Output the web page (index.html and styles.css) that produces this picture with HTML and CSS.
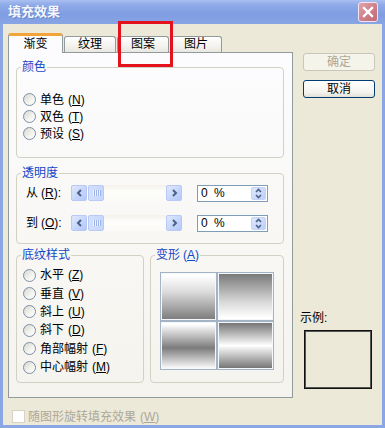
FILE: index.html
```html
<!DOCTYPE html>
<html lang="zh-CN">
<head>
  <meta charset="UTF-8">
  <title>填充效果</title>
  <link rel="stylesheet" href="styles.css">
</head>
<body>
  <div class="window">
    <div class="titlebar">
      <span class="title">填充效果</span>
      <span class="close">
        <svg width="12" height="12" viewBox="0 0 12 12"><path d="M2 2 L10 10 M10 2 L2 10" stroke="#fff" stroke-width="2.4" stroke-linecap="square"/></svg>
      </span>
    </div>

    <div class="frame">
      <div class="client">
        <div class="main">
          <div class="tabs">
            <div class="tab active">渐变</div>
            <div class="tab">纹理</div>
            <div class="tab">图案</div>
            <div class="tab">图片</div>
          </div>

          <div class="panel">
            <fieldset class="group colors">
              <legend>颜色</legend>
              <div class="radio-list">
                <div class="radio-row"><span class="radio"></span>单色<span class="key" lang="en">(<u>N</u>)</span></div>
                <div class="radio-row"><span class="radio"></span>双色<span class="key" lang="en">(<u>T</u>)</span></div>
                <div class="radio-row"><span class="radio"></span>预设<span class="key" lang="en">(<u>S</u>)</span></div>
              </div>
            </fieldset>

            <fieldset class="group opacity">
              <legend>透明度</legend>
              <div class="slider-row">
                <span class="slider-label">从<span class="key" lang="en">(<u>R</u>):</span></span>
                <div class="scrollbar">
                  <span class="sb-btn"><svg width="7" height="8" viewBox="0 0 7 8"><path d="M5 1 L2 4 L5 7" fill="none" stroke="#4d6185" stroke-width="2"/></svg></span>
                  <span class="thumb"><i></i><i></i><i></i><i></i></span>
                  <span class="track"></span>
                  <span class="sb-btn"><svg width="7" height="8" viewBox="0 0 7 8"><path d="M2 1 L5 4 L2 7" fill="none" stroke="#4d6185" stroke-width="2"/></svg></span>
                </div>
                <div class="spin-input">
                  <span class="value" lang="en">0 %</span>
                  <span class="spin">
                    <svg width="7" height="11" viewBox="0 0 7 11"><path d="M1 4 L3.5 1.5 L6 4 M1 7 L3.5 9.5 L6 7" fill="none" stroke="#4d6185" stroke-width="1.6"/></svg>
                  </span>
                </div>
              </div>
              <div class="slider-row">
                <span class="slider-label">到<span class="key" lang="en">(<u>O</u>):</span></span>
                <div class="scrollbar">
                  <span class="sb-btn"><svg width="7" height="8" viewBox="0 0 7 8"><path d="M5 1 L2 4 L5 7" fill="none" stroke="#4d6185" stroke-width="2"/></svg></span>
                  <span class="thumb"><i></i><i></i><i></i><i></i></span>
                  <span class="track"></span>
                  <span class="sb-btn"><svg width="7" height="8" viewBox="0 0 7 8"><path d="M2 1 L5 4 L2 7" fill="none" stroke="#4d6185" stroke-width="2"/></svg></span>
                </div>
                <div class="spin-input">
                  <span class="value" lang="en">0 %</span>
                  <span class="spin">
                    <svg width="7" height="11" viewBox="0 0 7 11"><path d="M1 4 L3.5 1.5 L6 4 M1 7 L3.5 9.5 L6 7" fill="none" stroke="#4d6185" stroke-width="1.6"/></svg>
                  </span>
                </div>
              </div>
            </fieldset>

            <div class="bottom-groups">
              <fieldset class="group shading">
                <legend>底纹样式</legend>
                <div class="radio-list">
                  <div class="radio-row"><span class="radio"></span>水平<span class="key" lang="en">(<u>Z</u>)</span></div>
                  <div class="radio-row"><span class="radio"></span>垂直<span class="key" lang="en">(<u>V</u>)</span></div>
                  <div class="radio-row"><span class="radio"></span>斜上<span class="key" lang="en">(<u>U</u>)</span></div>
                  <div class="radio-row"><span class="radio"></span>斜下<span class="key" lang="en">(<u>D</u>)</span></div>
                  <div class="radio-row"><span class="radio"></span>角部幅射<span class="key" lang="en">(<u>F</u>)</span></div>
                  <div class="radio-row"><span class="radio"></span>中心幅射<span class="key" lang="en">(<u>M</u>)</span></div>
                </div>
              </fieldset>

              <fieldset class="group variants">
                <legend>变形<span class="key" lang="en">(<u>A</u>)</span></legend>
                <div class="tiles">
                  <div class="tile t1"></div>
                  <div class="tile t2"></div>
                  <div class="tile t3"></div>
                  <div class="tile t4"></div>
                </div>
              </fieldset>
            </div>
          </div>

          <div class="check-row"><span class="checkbox"></span>随图形旋转填充效果<span class="key" lang="en">(<u>W</u>)</span></div>
        </div>

        <div class="side">
          <button class="btn" disabled>确定</button>
          <button class="btn default">取消</button>
          <div class="sample-label">示例:</div>
          <div class="sample-box"></div>
        </div>
      </div>
    </div>

    <div class="annotation"></div>
  </div>
</body>
</html>
```

FILE: styles.css
```css
* {
  box-sizing: border-box;
  margin: 0;
  padding: 0;
}

body {
  background: #ece9d8;
  font-family: "Liberation Sans", "Noto Sans CJK SC", sans-serif;
  font-size: 12px;
  line-height: 12px;
  color: #000;
}

/* latin accelerator hints like (N) */
.key {
  font-family: "Liberation Sans", sans-serif;
  margin-left: 4px;
}

.window {
  position: relative;
  width: 385px;
  height: 428px;
  overflow: hidden;
}

/* title bar */
.titlebar {
  height: 24px;
  display: flex;
  align-items: center;
  justify-content: space-between;
  padding: 0 7px 0 8px;
  background: linear-gradient(to bottom, #a9c0f0 0%, #8eaae8 20%, #7f9de2 60%, #88a5e5 100%);
}

.title {
  color: #f4f6fd;
  font-size: 13px;
  font-weight: bold;
  line-height: 14px;
  text-shadow: 1px 1px 0 #6a86c8;
}

.close {
  width: 20px;
  height: 20px;
  display: flex;
  align-items: center;
  justify-content: center;
  border: 1px solid #f1e4ee;
  border-radius: 3px;
  background: linear-gradient(135deg, #e1a3aa, #cc7c86 60%, #c06a76);
}

.frame {
  height: 404px;
  border: 3px solid #8aa6e4;
  border-top: 0;
  background: #ece9d8;
}

.client {
  display: flex;
  padding: 9px 0 0 5px;
}

.main {
  width: 285px;
}

/* tabs */
.tabs {
  display: flex;
  align-items: flex-end;
  height: 19px;
}

.tab {
  width: 52px;
  height: 16px;
  margin-left: 1px;
  border: 1px solid #919b9c;
  border-bottom: 0;
  border-radius: 3px 3px 0 0;
  background: linear-gradient(to bottom, #ffffff, #f3f2ee 60%, #e8e7e0);
  text-align: center;
  line-height: 15px;
}

.tab.active {
  position: relative;
  z-index: 1;
  width: 55px;
  height: 20px;
  margin: 0 0 -1px 0;
  background: #fcfcfe;
  border-top: 3px solid #f2a33a;
  line-height: 16px;
}

.panel {
  height: 346px;
  border: 1px solid #919b9c;
  padding: 8px 8px 0 7px;
  background: linear-gradient(to bottom, #fcfcfe, #f7f6f2 70%, #f4f3ee);
}

/* group boxes */
.group {
  min-width: 0;
  border: 1px solid #d3d1c4;
  border-radius: 4px;
  padding: 0;
}

.group legend {
  margin-left: 4px;
  padding: 0 1px;
  height: 12px;
  line-height: 12px;
  color: #1346c8;
}

.colors {
  height: 97px;
}

.colors .radio-list {
  padding-top: 18px;
}

.radio-row {
  display: flex;
  align-items: center;
  height: 17px;
  padding-left: 6px;
  white-space: nowrap;
}

.radio {
  width: 13px;
  height: 13px;
  margin-right: 4px;
  border: 1px solid #7e8ea4;
  border-radius: 50%;
  background: linear-gradient(135deg, #d8d8d0, #f4f4f0 60%, #ffffff);
}

.opacity {
  height: 77px;
  margin-top: 9px;
  padding-top: 6px;
}

.slider-row {
  display: flex;
  align-items: center;
  height: 16px;
  margin-bottom: 14px;
}

.slider-label {
  width: 45px;
  margin-left: 9px;
  white-space: nowrap;
}

.slider-label .key {
  margin-left: 3px;
}

.scrollbar {
  display: flex;
  width: 111px;
  height: 16px;
  background: linear-gradient(to bottom, #f3f1ea, #fdfdfb 40%, #fbfaf7);
}

.sb-btn {
  width: 16px;
  height: 16px;
  display: flex;
  align-items: center;
  justify-content: center;
  border: 1px solid #b7c9f4;
  border-radius: 2px;
  background: linear-gradient(135deg, #e0e9fd, #c3d4fc 60%, #b4c8f6);
}

.thumb {
  width: 16px;
  height: 16px;
  margin-left: 1px;
  display: flex;
  align-items: center;
  justify-content: center;
  gap: 1px;
  border: 1px solid #b7c9f4;
  border-radius: 2px;
  background: linear-gradient(to right, #d3e0fd, #c6d6fc);
}

.thumb i {
  width: 1px;
  height: 6px;
  background: #eef3fe;
  box-shadow: 1px 0 0 #9db3e8;
}

.track {
  flex: 1;
}

.spin-input {
  display: flex;
  align-items: center;
  justify-content: space-between;
  width: 71px;
  height: 17px;
  margin-left: 15px;
  padding: 0 1px 0 3px;
  border: 1px solid #7f9db9;
  background: #fff;
}

.value {
  font-family: "Liberation Sans", sans-serif;
  line-height: 13px;
  word-spacing: 3px;
}

.spin {
  width: 15px;
  height: 13px;
  display: flex;
  align-items: center;
  justify-content: center;
  border: 1px solid #c3d2f6;
  border-radius: 2px;
  background: linear-gradient(135deg, #dfe8fd, #bccffb);
}

.bottom-groups {
  display: flex;
  gap: 6px;
  margin-top: 5px;
}

.shading {
  width: 128px;
  height: 134px;
}

.shading .radio-list {
  padding-top: 5px;
}

.shading .radio-row {
  height: 18.4px;
}

.variants {
  width: 134px;
  height: 134px;
}

.variants legend .key {
  margin-left: 3px;
}

.tiles {
  display: grid;
  grid-template-columns: 57px 57px;
  grid-template-rows: 49px 49px;
  width: 114px;
  margin: 11px 0 0 9px;
}

.tile {
  border: 1px solid #a3b3c4;
  box-shadow: inset 0 0 0 1px #f4f8fc;
}

.t1 { background: linear-gradient(to bottom, #ffffff 5%, #dcdcdc 40%, #7a7a7a 100%); }
.t2 { background: linear-gradient(to bottom, #767676 0%, #d6d6d6 60%, #ffffff 95%); }
.t3 { background: linear-gradient(to bottom, #ffffff 5%, #7c7c7c 55%, #ffffff 100%); }
.t4 { background: linear-gradient(to bottom, #707070 0%, #ffffff 50%, #707070 100%); }

/* bottom checkbox */
.check-row {
  display: flex;
  align-items: center;
  margin: 12px 0 0 4px;
  height: 13px;
  color: #aca899;
  white-space: nowrap;
}

.checkbox {
  width: 13px;
  height: 13px;
  margin-right: 3px;
  border: 1px solid #d6d3c4;
  background: #fefefe;
}

/* right column */
.side {
  display: flex;
  flex-direction: column;
  width: 72px;
  margin-left: 10px;
}

.btn {
  width: 72px;
  height: 18px;
  font-family: inherit;
  font-size: 12px;
  line-height: 12px;
  border: 1px solid #003c74;
  border-radius: 3px;
  background: linear-gradient(to bottom, #ffffff, #f4f3ee 70%, #e3e1d6);
  color: #000;
}

.btn:first-child {
  margin-top: 20px;
}

.btn + .btn {
  margin-top: 9px;
}

.btn:disabled {
  border-color: #c9c7ba;
  background: #f5f4ea;
  color: #aca899;
}

.sample-label {
  margin: 214px 0 0 -3px;
  height: 12px;
}

.sample-box {
  width: 68px;
  height: 59px;
  margin: 6px 0 0 1px;
  border: 1px solid #111;
  box-shadow: inset 0 0 0 1px #555;
  background: #ece9d8;
}

/* red highlight drawn over the tab strip */
.annotation {
  position: absolute;
  left: 118px;
  top: 21px;
  width: 55px;
  height: 46px;
  border: 3px solid #e3121c;
}
```
